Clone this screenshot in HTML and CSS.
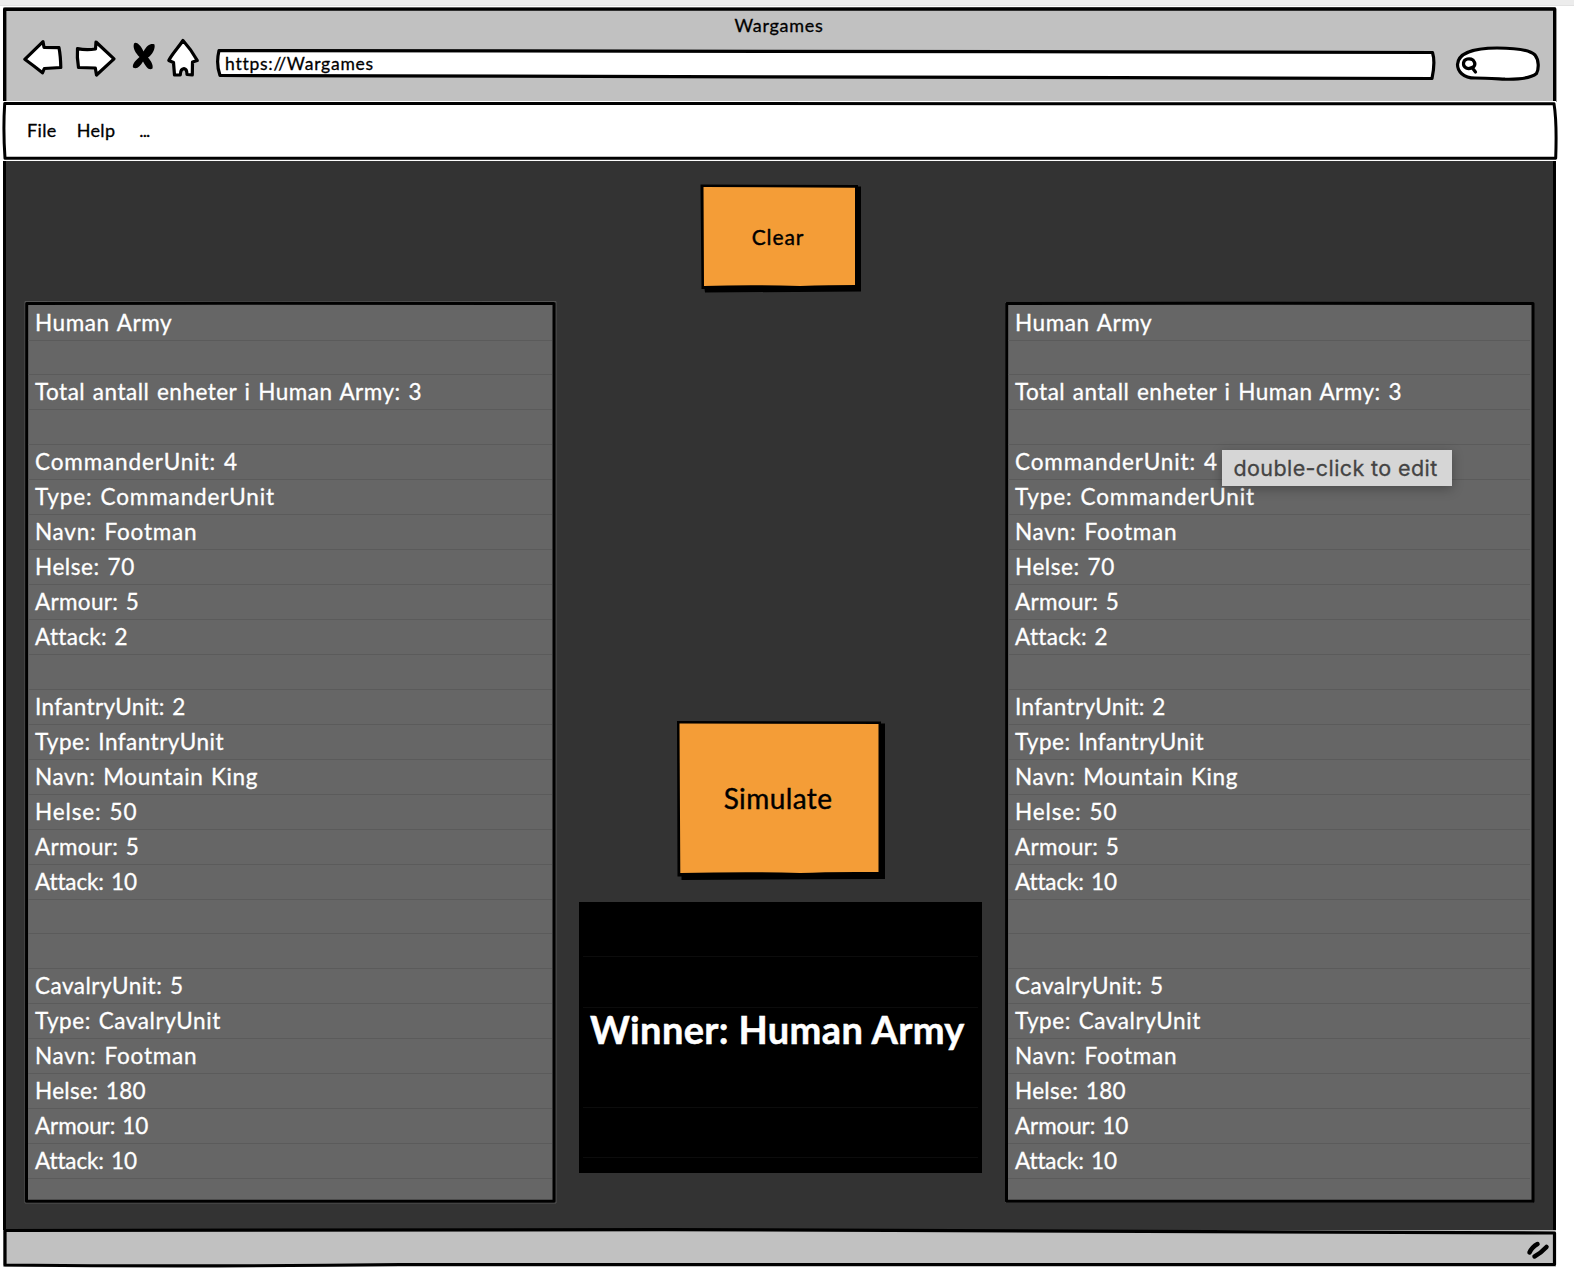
FILE: index.html
```html
<!DOCTYPE html>
<html lang="no">
<head>
<meta charset="utf-8">
<title>Wargames</title>
<link rel="stylesheet" href="styles.css">
</head>
<body>
<div class="top-strip"></div>
<div class="window">
  <header class="chrome">
    <svg class="sketch" width="1554" height="95" viewBox="3 7 1554 95">
      <path d="M4.7 102V9.2L1554.7 9V102" stroke-width="3.4"/>
    </svg>
    <div class="title">Wargames</div>
    <div class="toolbar">
      <svg class="nav" width="190" height="48" viewBox="20 35 190 48">
        <path class="outline" d="M24.800 59.300L43 41.700L44 47.300L59 47.700Q60.600 56 60.800 67.500L44.300 68.500L42.500 72.800Q34 66 24.800 59.300Z"/>
        <path class="outline" d="M77.500 48.600Q86 50.500 95.500 49L96 42L114 58.800L96.500 75L95.300 68L78.500 67.500Q76.800 57 77.500 48.600Z"/>
        <path d="M134 43.500C136 41.500 140 44 143.500 51.500C147 45 151 43 154.500 44.500C155.500 49 152 55 148 57.500C151 61 153.500 65 152.500 68.500C149 71 146 67 143 61.500C140 66.500 137 69.500 133 67.500C132 64 136 60 139.500 57C135.500 53 132.500 48 134 43.500Z"/>
        <path class="outline" d="M183 40.500C188 46 193 53 197.300 60.500L192.500 62L192.300 75L187 74.500Q187 69 184 68.700Q180.500 69 180.300 74.800L174.500 75L173.500 62.500L168.800 60.500C172 54 178 48 183 40.500Z"/>
      </svg>
      <div class="address">
        <svg class="sketch" width="1222" height="34" viewBox="215 47 1222 34">
          <path class="paper" d="M219 50.500C500 50.500 1000 51.500 1432.500 52.500Q1435.500 62 1432 78.500C1000 77.500 500 75.500 220 75.500Q215.800 64 219 50.500Z" stroke-width="3.200"/>
        </svg>
        <span class="url">https://Wargames</span>
      </div>
      <svg class="search" width="88" height="40" viewBox="1454 44 88 40">
        <path class="outline" d="M1475 78C1463 78 1457.500 71 1457.500 64.500C1458 53 1474 48 1497 48C1515 48 1530 50 1535 55C1539 60 1539 69 1536.500 73.500C1531 78 1518 79.500 1505 79.200C1492 78.500 1485 78 1475 78Z"/>
        <path class="glass" d="M1473.500 67C1468 70.500 1463 67.500 1463.500 63C1464 58.500 1470 58 1473 60C1475.500 63 1475 65.500 1473.500 67L1469 68.500M1472 67.500L1475.500 72"/>
      </svg>
    </div>
  </header>
  <nav class="menu">
    <svg class="sketch" width="1556" height="60" viewBox="2 101 1556 60">
      <path d="M4.700 103.500L1554 103.700Q1557 122 1555.700 158.300L5 158.300Q3 130 4.700 103.500Z" stroke-width="3"/>
    </svg>
    <span>File</span><span>Help</span><span class="dots">...</span>
  </nav>
  <main class="stage">
    <section class="army">
      <svg class="sketch" width="532" height="904" viewBox="24 300 532 904">
        <path class="halo" d="M25 1203V301.500L556 301.500V1203Z"/>
        <path d="M26.700 303.500C200 303 400 303.500 554 303.500Q553 700 554 1201.300L26.500 1201.300Q26.500 700 26.700 303.500Z" stroke-width="3"/>
      </svg>
      <ul class="lines">
        <li>Human Army</li><li></li>
        <li class="s5">Total antall enheter i Human Army: 3</li><li></li>
        <li class="s9">CommanderUnit: 4</li>
        <li class="s9">Type: CommanderUnit</li>
        <li class="s8">Navn: Footman</li>
        <li>Helse: 70</li>
        <li class="s3">Armour: 5</li>
        <li class="s3">Attack: 2</li><li></li>
        <li class="s3">InfantryUnit: 2</li>
        <li class="s5">Type: InfantryUnit</li>
        <li>Navn: Mountain King</li>
        <li class="s9">Helse: 50</li>
        <li class="s3">Armour: 5</li>
        <li class="s0">Attack: 10</li><li></li><li></li>
        <li class="s5">CavalryUnit: 5</li>
        <li>Type: CavalryUnit</li>
        <li class="s8">Navn: Footman</li>
        <li class="s3">Helse: 180</li>
        <li class="s0">Armour: 10</li>
        <li class="s0">Attack: 10</li><li></li>
      </ul>
    </section>
    <section class="center">
      <button class="btn clear">
        <svg class="sketch" width="162" height="110" viewBox="700 183 162 110">
          <path class="shade" d="M704 188L861 186.500V291.500L705 292.500L704.500 289H701.500L700.500 184.500L858 185V187Z"/>
          <path class="face" d="M703.500 187L855 187.700V285Q830 285 800 286Q750 284.500 704 286Z"/>
        </svg>
        <span>Clear</span>
      </button>
      <button class="btn simulate">
        <svg class="sketch" width="210" height="162" viewBox="676 720 210 162">
          <path class="shade" d="M677 721L881 721.500V723.500H885V879L681.500 880V876.500H677.500Z"/>
          <path class="face" d="M679.500 723.500L878.500 724V872Q830 871.500 800 873Q750 871.500 680.300 873Z"/>
        </svg>
        <span>Simulate</span>
      </button>
      <div class="winner">
        <div class="rule"></div><div class="rule"></div>
        <div class="rule bare"><span>Winner: Human Army</span></div>
        <div class="rule"></div><div class="rule"></div>
      </div>
    </section>
    <section class="army">
      <svg class="sketch" width="532" height="904" viewBox="24 300 532 904">
        <path d="M26.700 303.500C200 303 400 303.500 553 303.500Q552 700 553 1201.300L26.500 1201.300Q26.500 700 26.700 303.500Z" stroke-width="3"/>
      </svg>
      <ul class="lines">
        <li>Human Army</li><li></li>
        <li class="s5">Total antall enheter i Human Army: 3</li><li></li>
        <li class="s9">CommanderUnit: 4</li>
        <li class="s9">Type: CommanderUnit</li>
        <li class="s8">Navn: Footman</li>
        <li>Helse: 70</li>
        <li class="s3">Armour: 5</li>
        <li class="s3">Attack: 2</li><li></li>
        <li class="s3">InfantryUnit: 2</li>
        <li class="s5">Type: InfantryUnit</li>
        <li>Navn: Mountain King</li>
        <li class="s9">Helse: 50</li>
        <li class="s3">Armour: 5</li>
        <li class="s0">Attack: 10</li><li></li><li></li>
        <li class="s5">CavalryUnit: 5</li>
        <li>Type: CavalryUnit</li>
        <li class="s8">Navn: Footman</li>
        <li class="s3">Helse: 180</li>
        <li class="s0">Armour: 10</li>
        <li class="s0">Attack: 10</li><li></li>
      </ul>
      <div class="tooltip">double-click to edit</div>
    </section>
  </main>
  <footer class="status">
    <svg class="sketch" width="1556" height="42" viewBox="2 1226 1556 42">
      <path class="gray" d="M5 1230.500C500 1229 1100 1229 1554.500 1233V1264.500C1100 1266 700 1264 400 1264.500C200 1267 100 1266 5 1265Z" stroke-width="3.200"/>
      <path class="grip" d="M1529.500 1252.500Q1532 1247 1537.500 1244M1534.500 1256.500Q1541 1253 1546.500 1247"/>
    </svg>
  </footer>
</div>
</body>
</html>
```
FILE: styles.css
```css
* { box-sizing: border-box; }
body { margin: 0; width: 1574px; height: 1284px; overflow: hidden; background: #fff; font-family: Lato, "Open Sans", sans-serif; color: #000; -webkit-text-stroke: .3px; }
.top-strip { height: 6px; background: #ececec; border-bottom: 1.500px solid #e2e2e2; }
.window { margin: 1px 0 0 3px; width: 1553px; display: flex; flex-direction: column; }
.sketch { position: absolute; overflow: visible; fill: none; stroke: #000; stroke-linejoin: round; z-index: 0; }
.chrome { position: relative; height: 94px; background: #c1c1c1; }
.chrome .sketch { left: 0; top: 0; }
.title { position: relative; height: 32px; padding: 6px 1px 0 0; text-align: center; font-size: 18px; line-height: 24px; letter-spacing: .7px; }
.toolbar { position: relative; display: flex; align-items: flex-start; padding: 0 0 0 17px; margin-top: -4px; }
.outline { fill: #fff; stroke: #000; stroke-width: 3.200; stroke-linejoin: round; }
.glass { fill: none; stroke: #000; stroke-width: 3.200; stroke-linecap: round; }
.address { position: relative; width: 1222px; height: 34px; margin: 12px 17px 0 5px; }
.paper { fill: #fff; }
.url { position: relative; display: block; width: max-content; margin-left: 10px; font-size: 17.500px; line-height: 33px; letter-spacing: .75px; }
.search { margin-top: 9px; }
.menu { position: relative; display: flex; height: 60px; background: #fff; padding: 16px 0 0 24px; gap: 20px; font-size: 18px; line-height: 26px; letter-spacing: .35px; }
.menu .sketch { left: -1px; top: 0; }
.dots { margin-left: 4px; letter-spacing: -.88px; }
.stage { display: grid; grid-template-columns: 530px 450px 529px; height: 1069px; background: #333; border: solid #000; border-width: 0 3.500px; padding: 141px 18.500px 0; }
.army { position: relative; height: 901px; background: #666; }
.army:last-child { width: 528px; }
.army .sketch { left: -1px; top: -2px; }
.halo { stroke: #555; stroke-width: 1; }
.lines { position: relative; list-style: none; margin: 0; padding: 3.600px 3px 0; color: #fff; font-size: 22.500px; word-spacing: 1.500px; letter-spacing: .57px; }
.lines li { height: 34.950px; line-height: 34px; padding-left: 7.500px; border-bottom: 1px solid #5b5b5b; white-space: nowrap; }
.lines li:last-child { border: 0; height: 20px; }
.lines .s0 { letter-spacing: -.12px; }
.lines .s3 { letter-spacing: .32px; }
.lines .s5 { letter-spacing: .49px; }
.lines .s8 { letter-spacing: .78px; }
.lines .s9 { letter-spacing: .87px; }
.center { display: flex; flex-direction: column; align-items: center; margin-top: -119px; padding-left: 2px; }
.btn { position: relative; border: 0; padding: 0; background: none; color: #000; font-family: inherit; -webkit-text-stroke: .4px; }
.btn span { position: relative; display: block; }
.btn .sketch { left: 0; top: 0; }
.shade { fill: #000; stroke: none; }
.face { fill: #f49d37; stroke: none; }
.clear { width: 162px; height: 110px; padding: 0 5px 4px 0; font-size: 21px; letter-spacing: .9px; }
.simulate { width: 210px; height: 162px; margin-top: 427px; padding: 0 5px 6px 0; font-size: 28px; letter-spacing: .4px; }
.winner { width: 403px; height: 271px; margin-top: 20px; background: #000; padding: 5px 4px; color: #fff; font-size: 38px; font-weight: 700; letter-spacing: .35px; -webkit-text-stroke: .5px; }
.rule { height: 50.300px; border-bottom: 1px solid #0c0c0c; padding-left: 7px; line-height: 43px; white-space: nowrap; }
.rule.bare { border-color: transparent; }
.tooltip { position: absolute; left: 217px; top: 148px; width: 230px; height: 36px; background: #d6d6d6; color: #444; font: 21.500px/37px Inter, sans-serif; letter-spacing: .4px; padding-left: 12px; white-space: nowrap; box-shadow: 0 3px 12px rgba(0,0,0,.28); }
.status { position: relative; height: 37px; background: #c1c1c1; }
.status .sketch { left: -1px; top: -4px; }
.gray { fill: #c1c1c1; }
.grip { stroke-width: 4.500; stroke-linecap: round; }
```
